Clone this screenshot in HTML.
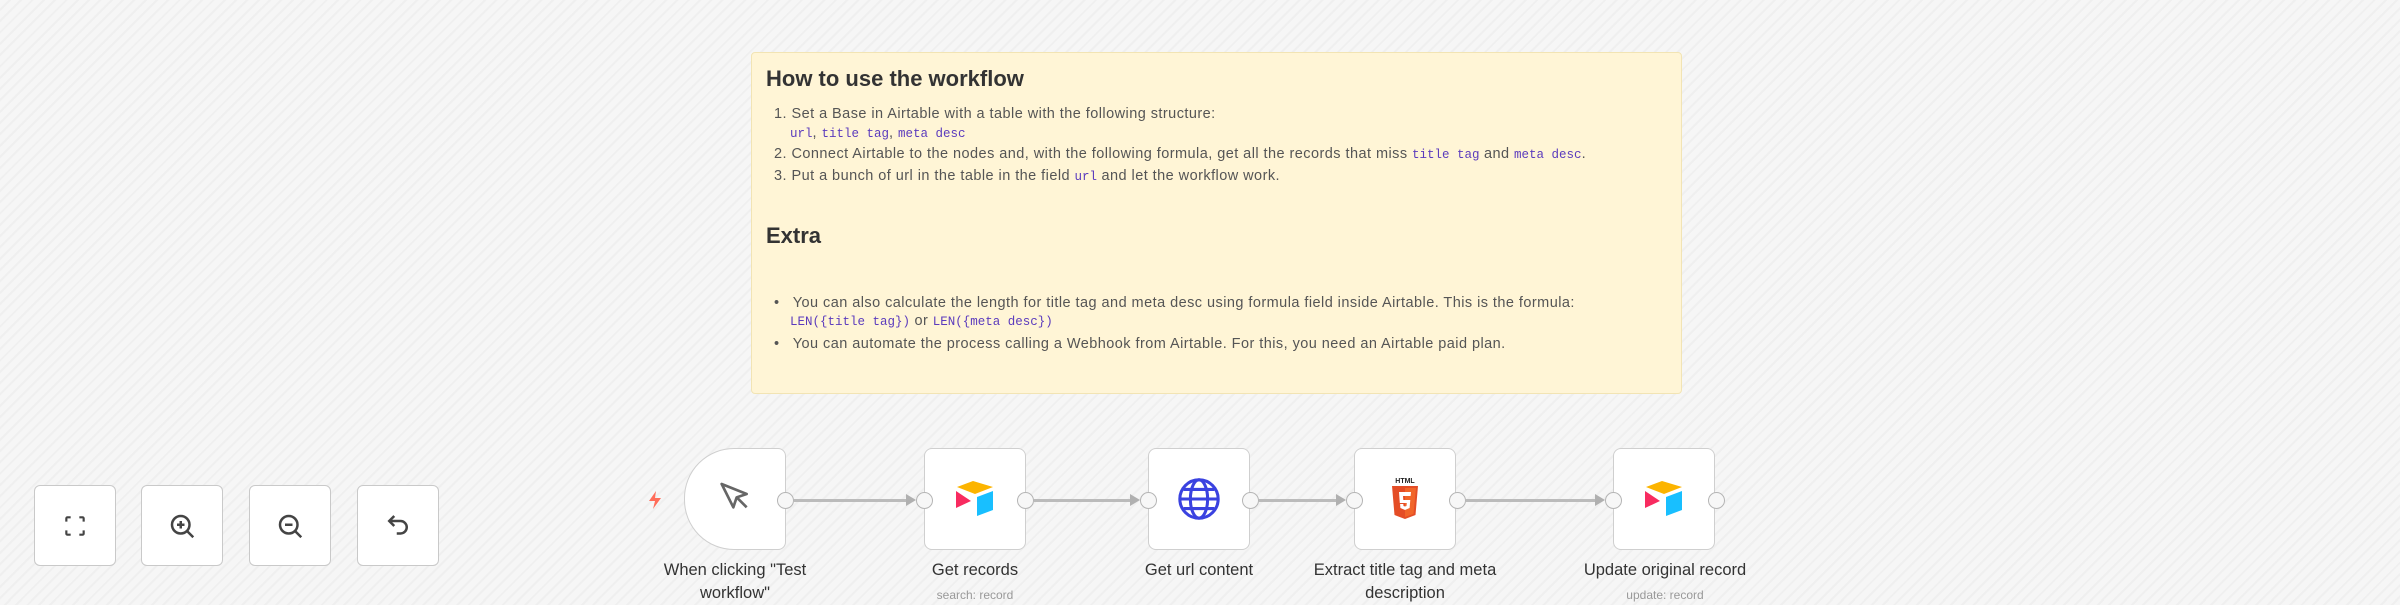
<!DOCTYPE html>
<html><head><meta charset="utf-8"><style>
*{margin:0;padding:0;box-sizing:border-box}
body{width:2400px;height:600px;overflow:hidden;position:relative;font-family:"Liberation Sans",sans-serif;
background:#f4f4f4 repeating-linear-gradient(135deg,#f6f6f6 0 6px,#efefef 6px 8px);}
.note{position:absolute;left:751px;top:52px;width:931px;height:342px;background:#fff5d6;border:1px solid #f2e4b4;border-radius:4px;color:#444;}
.note h2{position:absolute;left:14px;font-size:22px;font-weight:bold;color:#333;}
.note .l{position:absolute;left:22px;font-size:14.5px;color:#555;white-space:nowrap;letter-spacing:0.45px}
.note code{font-family:"Liberation Mono",monospace;color:#5b3bbd;font-size:12.5px;letter-spacing:0}
.btn{position:absolute;top:485px;width:82px;height:81px;background:#fff;border:1px solid #c9c9c9;border-radius:6px;display:flex;align-items:center;justify-content:center}
.node{position:absolute;top:448px;width:102px;height:102px;background:#fff;border:1.5px solid #cfcfcf;border-radius:8px;display:flex;align-items:center;justify-content:center}
.h{position:absolute;width:17px;height:17px;border:1.5px solid #b5b5b5;background:#f7f7f7;border-radius:50%;top:492px}
.line{position:absolute;top:499px;height:3px;background:#bbb}
.arr{position:absolute;top:494px;width:0;height:0;border-top:6px solid transparent;border-bottom:6px solid transparent;border-left:10px solid #b0b0b0}
.lab{position:absolute;top:559px;font-size:16.5px;color:#333;text-align:center;line-height:23px}
.sub{position:absolute;top:588px;font-size:12px;color:#999;text-align:center}
</style></head><body>
<div class="note">
<h2 style="top:13px">How to use the workflow</h2>
<div class="l" style="top:53px">1. Set a Base in Airtable with a table with the following structure:</div>
<div class="l" style="top:72px;left:38px"><code>url</code>, <code>title tag</code>, <code>meta desc</code></div>
<div class="l" style="top:93px">2. Connect Airtable to the nodes and, with the following formula, get all the records that miss <code>title tag</code> and <code>meta desc</code>.</div>
<div class="l" style="top:115px">3. Put a bunch of url in the table in the field <code>url</code> and let the workflow work.</div>
<h2 style="top:170px">Extra</h2>
<div class="l" style="top:242px">•&nbsp;&nbsp; You can also calculate the length for title tag and meta desc using formula field inside Airtable. This is the formula:</div>
<div class="l" style="top:260px;left:38px"><code>LEN({title tag})</code> or <code>LEN({meta desc})</code></div>
<div class="l" style="top:283px">•&nbsp;&nbsp; You can automate the process calling a Webhook from Airtable. For this, you need an Airtable paid plan.</div>
</div>

<div class="btn" style="left:34px"><svg width="26" height="26" viewBox="0 0 24 24" fill="none" stroke="#444" stroke-width="2"><path d="M4 8V5a1 1 0 0 1 1-1h3M16 4h3a1 1 0 0 1 1 1v3M20 16v3a1 1 0 0 1-1 1h-3M8 20H5a1 1 0 0 1-1-1v-3"/></svg></div>
<div class="btn" style="left:141px"><svg width="30" height="30" viewBox="0 0 24 24" fill="none" stroke="#444" stroke-width="2"><circle cx="11" cy="11" r="7"/><path d="M16 16l5 5M11 8v6M8 11h6"/></svg></div>
<div class="btn" style="left:249px"><svg width="30" height="30" viewBox="0 0 24 24" fill="none" stroke="#444" stroke-width="2"><circle cx="11" cy="11" r="7"/><path d="M16 16l5 5M8 11h6"/></svg></div>
<div class="btn" style="left:357px"><svg width="30" height="30" viewBox="0 0 24 24" fill="none" stroke="#444" stroke-width="2"><path d="M9 4L5 8l4 4"/><path d="M5 8h9a5 5 0 0 1 0 10h-3"/></svg></div>

<svg style="position:absolute;left:647px;top:490px" width="16" height="20" viewBox="0 0 16 20"><path d="M9 1L2 11h6l-2 8 8-11H8z" fill="#ff6d5a"/></svg>

<div class="node" style="left:684px;border-radius:50px 8px 8px 50px"><svg width="40" height="40" viewBox="0 0 24 24" fill="none" stroke="#666" stroke-width="1.6" stroke-linejoin="round"><path d="M4 3l15 6-6 2-2 6z"/><path d="M13 11l6 6"/></svg></div>
<div class="node" style="left:924px"><svg width="44" height="40" viewBox="0 0 44 40"><path d="M20 2L4 8l18 7 18-7z" fill="#fcb400"/><path d="M24 18v19l16-6V12z" fill="#18bfff"/><path d="M3 12v17l15-7z" fill="#f82b60"/></svg></div>
<div class="node" style="left:1148px"><svg width="46" height="46" viewBox="0 0 24 24" fill="none" stroke="#3a42e0" stroke-width="1.6"><circle cx="12" cy="12" r="10"/><ellipse cx="12" cy="12" rx="4.5" ry="10"/><path d="M2 12h20M4 7h16M4 17h16"/></svg></div>
<div class="node" style="left:1354px"><svg width="30" height="44" viewBox="0 0 30 44"><text x="15" y="6" font-size="7" font-weight="bold" text-anchor="middle" font-family="Liberation Sans" fill="#222">HTML</text><path d="M2 9h26l-2.5 29L15 42 4.5 38z" fill="#e44d26"/><path d="M15 11v29l8.5-3L26 11z" fill="#f16529"/><path d="M9 15h12l-.4 4H13l.3 4h7l-.7 8L15 33l-4.6-2-.3-4h3.2l.2 2 1.5.5 1.5-.5.3-3H9.8z" fill="#fff"/></svg></div>
<div class="node" style="left:1613px"><svg width="44" height="40" viewBox="0 0 44 40"><path d="M20 2L4 8l18 7 18-7z" fill="#fcb400"/><path d="M24 18v19l16-6V12z" fill="#18bfff"/><path d="M3 12v17l15-7z" fill="#f82b60"/></svg></div>

<div class="line" style="left:794px;width:112px"></div><div class="arr" style="left:906px"></div>
<div class="line" style="left:1034px;width:100px"></div><div class="arr" style="left:1130px"></div>
<div class="line" style="left:1259px;width:80px"></div><div class="arr" style="left:1336px"></div>
<div class="line" style="left:1466px;width:132px"></div><div class="arr" style="left:1595px"></div>

<div class="h" style="left:777px"></div>
<div class="h" style="left:916px"></div><div class="h" style="left:1017px"></div>
<div class="h" style="left:1140px"></div><div class="h" style="left:1242px"></div>
<div class="h" style="left:1346px"></div><div class="h" style="left:1449px"></div>
<div class="h" style="left:1605px"></div><div class="h" style="left:1708px"></div>

<div class="lab" style="left:635px;width:200px">When clicking "Test<br>workflow"</div>
<div class="lab" style="left:875px;width:200px">Get records</div>
<div class="sub" style="left:875px;width:200px">search: record</div>
<div class="lab" style="left:1099px;width:200px">Get url content</div>
<div class="lab" style="left:1290px;width:230px">Extract title tag and meta<br>description</div>
<div class="lab" style="left:1555px;width:220px">Update original record</div>
<div class="sub" style="left:1555px;width:220px">update: record</div>
</body></html>
